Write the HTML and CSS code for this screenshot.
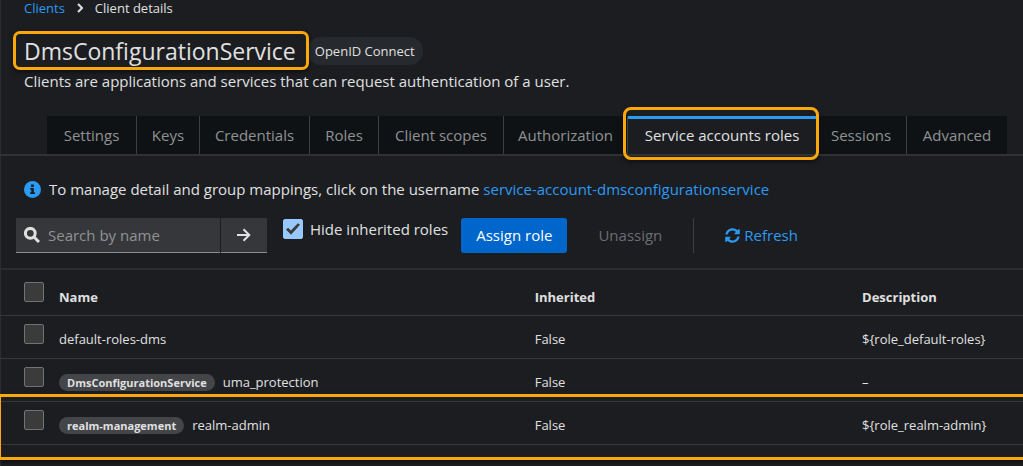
FILE: index.html
```
<!DOCTYPE html>
<html lang="en">
<head>
<meta charset="utf-8">
<meta name="viewport" content="width=device-width, initial-scale=1">
<title>Client details</title>
<link rel="stylesheet" href="styles.css">
</head>
<body>
<main class="page">
  <header class="page-header">
    <nav class="breadcrumb" aria-label="Breadcrumb">
      <a class="link" href="#">Clients</a>
      <svg class="breadcrumb-sep" viewBox="0 0 6 10" aria-hidden="true"><path d="M1 1l4 4-4 4"/></svg>
      <span>Client details</span>
    </nav>
    <div class="title-row">
      <h1 class="title">DmsConfigurationService</h1>
      <span class="protocol">OpenID Connect</span>
    </div>
    <p class="subtitle">Clients are applications and services that can request authentication of a user.</p>
  </header>

  <div class="tabs" role="tablist">
    <button class="tab" role="tab">Settings</button>
    <button class="tab" role="tab">Keys</button>
    <button class="tab" role="tab">Credentials</button>
    <button class="tab" role="tab">Roles</button>
    <button class="tab" role="tab">Client scopes</button>
    <button class="tab" role="tab">Authorization</button>
    <button class="tab tab-active" role="tab" aria-selected="true">Service accounts roles</button>
    <button class="tab" role="tab">Sessions</button>
    <button class="tab" role="tab">Advanced</button>
  </div>

  <p class="notice">
    <svg class="notice-icon" viewBox="0 0 17 17" aria-hidden="true"><circle cx="8.500" cy="8.500" r="8.500" fill="#2b9af3"/><path fill="#1b1d21" d="M7.100 3.500h2.700v2.400H7.100zM6.200 7h3.600v4.300h1.100v1.800H6.200v-1.800h1.100V8.700H6.200z"/></svg>
    <span>To manage detail and group mappings, click on the username <a class="link" href="#">service-account-dmsconfigurationservice</a></span>
  </p>

  <div class="toolbar">
    <form class="search">
      <label class="search-field">
        <svg class="search-icon" viewBox="0 0 16 16" aria-hidden="true"><circle cx="6.300" cy="6.300" r="4.900"/><path d="M10 10l5 5"/></svg>
        <input class="search-input" type="text" placeholder="Search by name" aria-label="Search by name">
      </label>
      <button class="search-button" type="button" aria-label="Search">
        <svg class="arrow-icon" viewBox="0 0 14 14" aria-hidden="true"><path d="M0 7h12M6.500 1.200L12.300 7l-5.800 5.800"/></svg>
      </button>
    </form>
    <label class="hide-roles"><input class="check" type="checkbox" checked>Hide inherited roles</label>
    <button class="primary" type="button">Assign role</button>
    <button class="plain" type="button" disabled>Unassign</button>
    <span class="divider"></span>
    <button class="refresh" type="button">
      <svg class="refresh-icon" viewBox="0 0 512 512" aria-hidden="true"><path d="M370.720 133.280C339.458 104.008 298.888 87.962 255.848 88c-77.458.068-144.328 53.178-162.791 126.850-1.344 5.363-6.122 9.150-11.651 9.150H24.103c-7.498 0-13.194-6.807-11.807-14.176C33.933 94.924 134.813 8 256 8c66.448 0 126.791 26.136 171.315 68.685L463.030 40.970C478.149 25.851 504 36.559 504 57.941V192c0 13.255-10.745 24-24 24H345.941c-21.382 0-32.090-25.851-16.971-40.971l41.750-41.749zM32 296h134.059c21.382 0 32.090 25.851 16.971 40.971l-41.750 41.750c31.262 29.273 71.835 45.319 114.876 45.280 77.418-.07 144.315-53.144 162.787-126.849 1.344-5.363 6.122-9.150 11.651-9.150h57.304c7.498 0 13.194 6.807 11.807 14.176C478.067 417.076 377.187 504 256 504c-66.448 0-126.791-26.136-171.315-68.685L48.970 471.030C33.851 486.149 8 475.441 8 454.059V320c0-13.255 10.745-24 24-24z"/></svg>
      Refresh
    </button>
  </div>

  <div class="table-wrap">
    <table class="roles">
      <thead>
        <tr>
          <th class="col-check"><input class="check" type="checkbox" aria-label="Select all rows"></th>
          <th class="col-name">Name</th>
          <th class="col-inherited">Inherited</th>
          <th>Description</th>
        </tr>
      </thead>
      <tbody>
        <tr>
          <td class="col-check"><input class="check" type="checkbox" aria-label="Select default-roles-dms"></td>
          <td>default-roles-dms</td>
          <td>False</td>
          <td>${role_default-roles}</td>
        </tr>
        <tr>
          <td class="col-check"><input class="check" type="checkbox" aria-label="Select uma_protection"></td>
          <td><span class="badge">DmsConfigurationService</span>uma_protection</td>
          <td>False</td>
          <td>–</td>
        </tr>
        <tr>
          <td class="col-check"><input class="check" type="checkbox" aria-label="Select realm-admin"></td>
          <td><span class="badge">realm-management</span>realm-admin</td>
          <td>False</td>
          <td>${role_realm-admin}</td>
        </tr>
      </tbody>
    </table>
    <div class="row-highlight"></div>
  </div>
</main>
</body>
</html>
```
FILE: styles.css
```
* { box-sizing: border-box; }

body {
  margin: 0;
  background: #1b1d21;
  color: #e0e0e0;
  font: 15px/20px "Open Sans", "Noto Sans", sans-serif;
}

button, input { font: inherit; color: inherit; }

button {
  margin: 0;
  padding: 0;
  border: 0;
  background: none;
}

.page {
  min-height: 100vh;
  overflow: hidden;
  box-shadow: inset 1px 0 #2b2d31;
}

.link { color: #2b9af3; text-decoration: none; }

.page-header { padding: 0 24px; }

.breadcrumb {
  display: flex;
  align-items: center;
  gap: 12px;
  height: 16px;
  font-size: 13px;
}

.breadcrumb-sep {
  width: 6px;
  height: 10px;
  fill: none;
  stroke: #e0e0e0;
  stroke-width: 2;
}

.title-row {
  display: flex;
  align-items: center;
  padding-top: 15px;
  margin-left: -11px;
}

.title {
  position: relative;
  margin: 0;
  padding: 3px 10px 2px 8px;
  border: 3px solid #fba90a;
  border-radius: 7px;
  box-shadow: 0 2px 4px #0008;
  font-size: 23px;
  line-height: 28px;
  font-weight: 400;
}

.protocol {
  margin-left: -2px;
  padding: 4px 8px;
  border-radius: 14px;
  background: #26292d;
  font-size: 13px;
}

.subtitle { margin: 1px 0 0; }

.tabs {
  display: grid;
  grid-template-columns: 90fr 63fr 110fr 69fr 125fr 124fr 188fr 91fr 100fr;
  margin-top: 25px;
  padding: 0 16px 0 47px;
  border-bottom: 2px solid #303236;
}

.tab {
  height: 38px;
  border-right: 1px solid #3c3f42;
  background: #0f1214;
  color: #8f9295;
  white-space: nowrap;
}

.tab:last-child { border-right: 0; }

.tab-active {
  position: relative;
  border-top: 3px solid #2b9af3;
  border-right: 0;
  background: #1b1d21;
  color: #e0e0e0;
  padding-bottom: 3px;
}

.tab-active::after {
  content: "";
  position: absolute;
  inset: -12px -3px -6px -5px;
  border: 3px solid #fba90a;
  border-radius: 8px;
  box-shadow: 0 2px 4px #0008;
}

.notice {
  display: flex;
  align-items: center;
  gap: 8px;
  margin: 0;
  padding: 23px 24px 0;
}

.notice-icon { width: 17px; height: 17px; }

.toolbar {
  display: flex;
  align-items: center;
  padding: 19px 16px 15px;
  border-bottom: 2px solid #2b2d31;
}

.search { display: flex; gap: 1px; }

.search-field, .search-button {
  display: flex;
  align-items: center;
  height: 35px;
  border-bottom: 1px solid #8a8d90;
  background: #36373a;
}

.search-field { width: 204px; padding: 0 8px; gap: 8px; }

.search-icon {
  flex: none;
  width: 16px;
  height: 16px;
  fill: none;
  stroke: #e0e0e0;
  stroke-width: 3;
}

.search-input {
  min-width: 0;
  flex: 1;
  padding: 0;
  border: 0;
  outline: 0;
  background: none;
}

.search-input::placeholder { color: #8f9295; opacity: 1; }

.search-button { width: 46px; justify-content: center; }

.arrow-icon {
  width: 14px;
  height: 14px;
  fill: none;
  stroke: #e0e0e0;
  stroke-width: 2;
}

.check {
  appearance: none;
  display: block;
  width: 20px;
  height: 20px;
  margin: 0;
  border: 1px solid #707274;
  border-radius: 2px;
  background: #3b3b3b;
}

.check:checked {
  display: grid;
  place-items: center;
  border-color: #99c8ff;
  background: #99c8ff;
}

.check:checked::after {
  content: "";
  width: 14px;
  height: 12px;
  background: #3b3b3b;
  clip-path: polygon(0 55%, 15% 40%, 35% 62%, 85% 2%, 100% 15%, 36% 98%);
}

.hide-roles {
  display: flex;
  align-items: center;
  align-self: flex-start;
  gap: 7px;
  margin: 1px 13px 0 16px;
}

.primary {
  height: 35px;
  padding: 0 15px 1px;
  border-radius: 3px;
  background: #06c;
  color: #fff;
}

.plain { padding: 0 31px 1px; color: #6a6e73; }

.divider { width: 1px; height: 35px; background: #3c3f42; }

.refresh {
  display: flex;
  align-items: center;
  gap: 4px;
  padding: 0 31px 1px;
  color: #2b9af3;
}

.refresh-icon { width: 15px; height: 15px; fill: #2b9af3; }

.table-wrap { position: relative; }

.roles {
  width: 100%;
  table-layout: fixed;
  border-collapse: collapse;
  font-size: 13px;
  text-align: left;
}

.roles th, .roles td {
  height: 43px;
  padding: 4px 8px 0;
  border-bottom: 1px solid #36383c;
  vertical-align: middle;
}

.roles th { height: 45px; padding-top: 10px; }

.roles .col-check {
  width: 51px;
  padding: 8px 0 0 24px;
  vertical-align: top;
}

.roles th.col-check { padding-top: 12px; }

.roles .col-name { width: 46.5%; }
.roles .col-inherited { width: 32%; }

.badge {
  display: inline-block;
  margin-right: 8px;
  padding: 0 8px;
  border-radius: 9px;
  background: #434549;
  font-size: 11px;
  line-height: 17px;
  font-weight: 700;
}

.row-highlight {
  position: absolute;
  inset: auto -3px -15px -2px;
  height: 66px;
  border: 3px solid #fba90a;
  box-shadow: 0 2px 4px #0008;
  pointer-events: none;
}
```
